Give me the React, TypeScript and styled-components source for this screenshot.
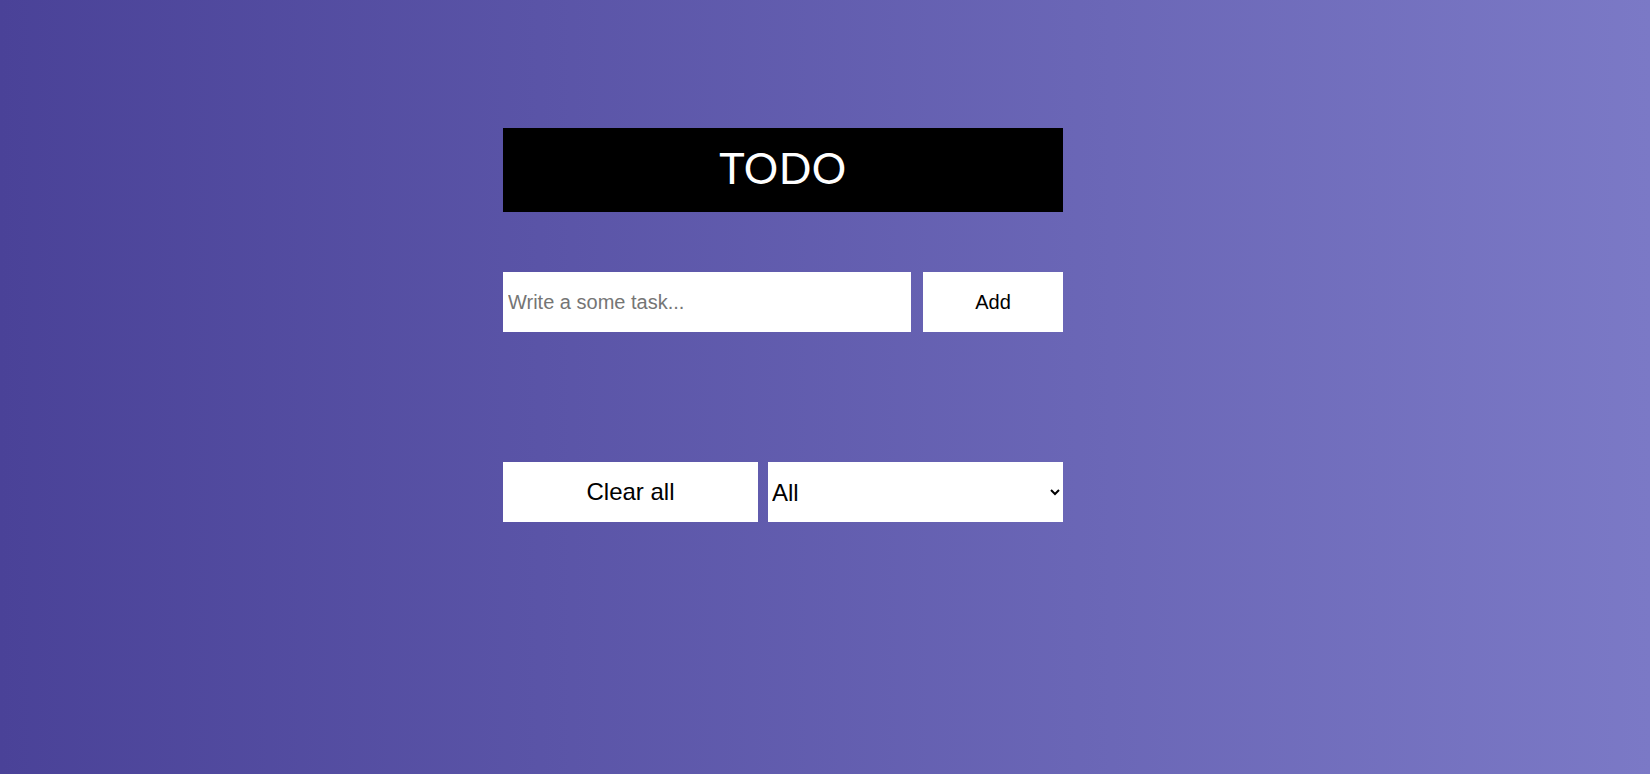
import React from "react";
import styled, { createGlobalStyle } from "styled-components";

const Global = createGlobalStyle`
  html, body { margin: 0; padding: 0; }
  body {
    min-height: 774px;
    background: linear-gradient(to right, #4a4298, #7b79c6);
    font-family: "Liberation Sans", Arial, sans-serif;
  }
`;

const Page = styled.div`
  min-height: 774px;
  display: flex;
  justify-content: flex-start;
  padding-left: 503px;
  padding-top: 128px;
  box-sizing: border-box;
`;

const Column = styled.div`
  width: 560px;
  display: flex;
  flex-direction: column;
`;

const Header = styled.h1`
  margin: 0;
  height: 84px;
  box-sizing: border-box;
  padding-bottom: 6px;
  background: #000;
  color: #fff;
  display: flex;
  align-items: center;
  justify-content: center;
  font-family: Lato, "Liberation Sans", sans-serif;
  font-weight: 400;
  font-size: 43px;
  letter-spacing: 0.5px;
`;

const Row = styled.div<{ $top: number; $gap: number }>`
  display: flex;
  gap: ${(p) => p.$gap}px;
  margin-top: ${(p) => p.$top}px;
  height: 60px;
`;

const TaskInput = styled.input`
  flex: 1;
  border: none;
  outline: none;
  padding: 0 5px;
  font-family: "Liberation Sans", Arial, sans-serif;
  font-size: 20px;
  background: #fff;
  &::placeholder { color: #757575; }
`;

const Button = styled.button<{ $w: number; $size: number }>`
  width: ${(p) => p.$w}px;
  border: none;
  background: #fff;
  color: #000;
  font-family: "Liberation Sans", Arial, sans-serif;
  font-size: ${(p) => p.$size}px;
  cursor: pointer;
  padding: 0;
`;

const Select = styled.select`
  flex: 1;
  border: none;
  outline: none;
  background: #fff;
  color: #000;
  font-family: "Liberation Sans", Arial, sans-serif;
  font-size: 24px;
  padding: 0;
`;

export default function App() {
  return (
    <>
      <Global />
      <Page>
        <Column>
          <Header>TODO</Header>
          <Row $top={60} $gap={12}>
            <TaskInput placeholder="Write a some task..." />
            <Button $w={140} $size={20}>Add</Button>
          </Row>
          <Row $top={130} $gap={10}>
            <Button $w={255} $size={24}>Clear all</Button>
            <Select defaultValue="all">
              <option value="all">All</option>
              <option value="done">Completed</option>
              <option value="todo">Uncompleted</option>
            </Select>
          </Row>
        </Column>
      </Page>
    </>
  );
}
